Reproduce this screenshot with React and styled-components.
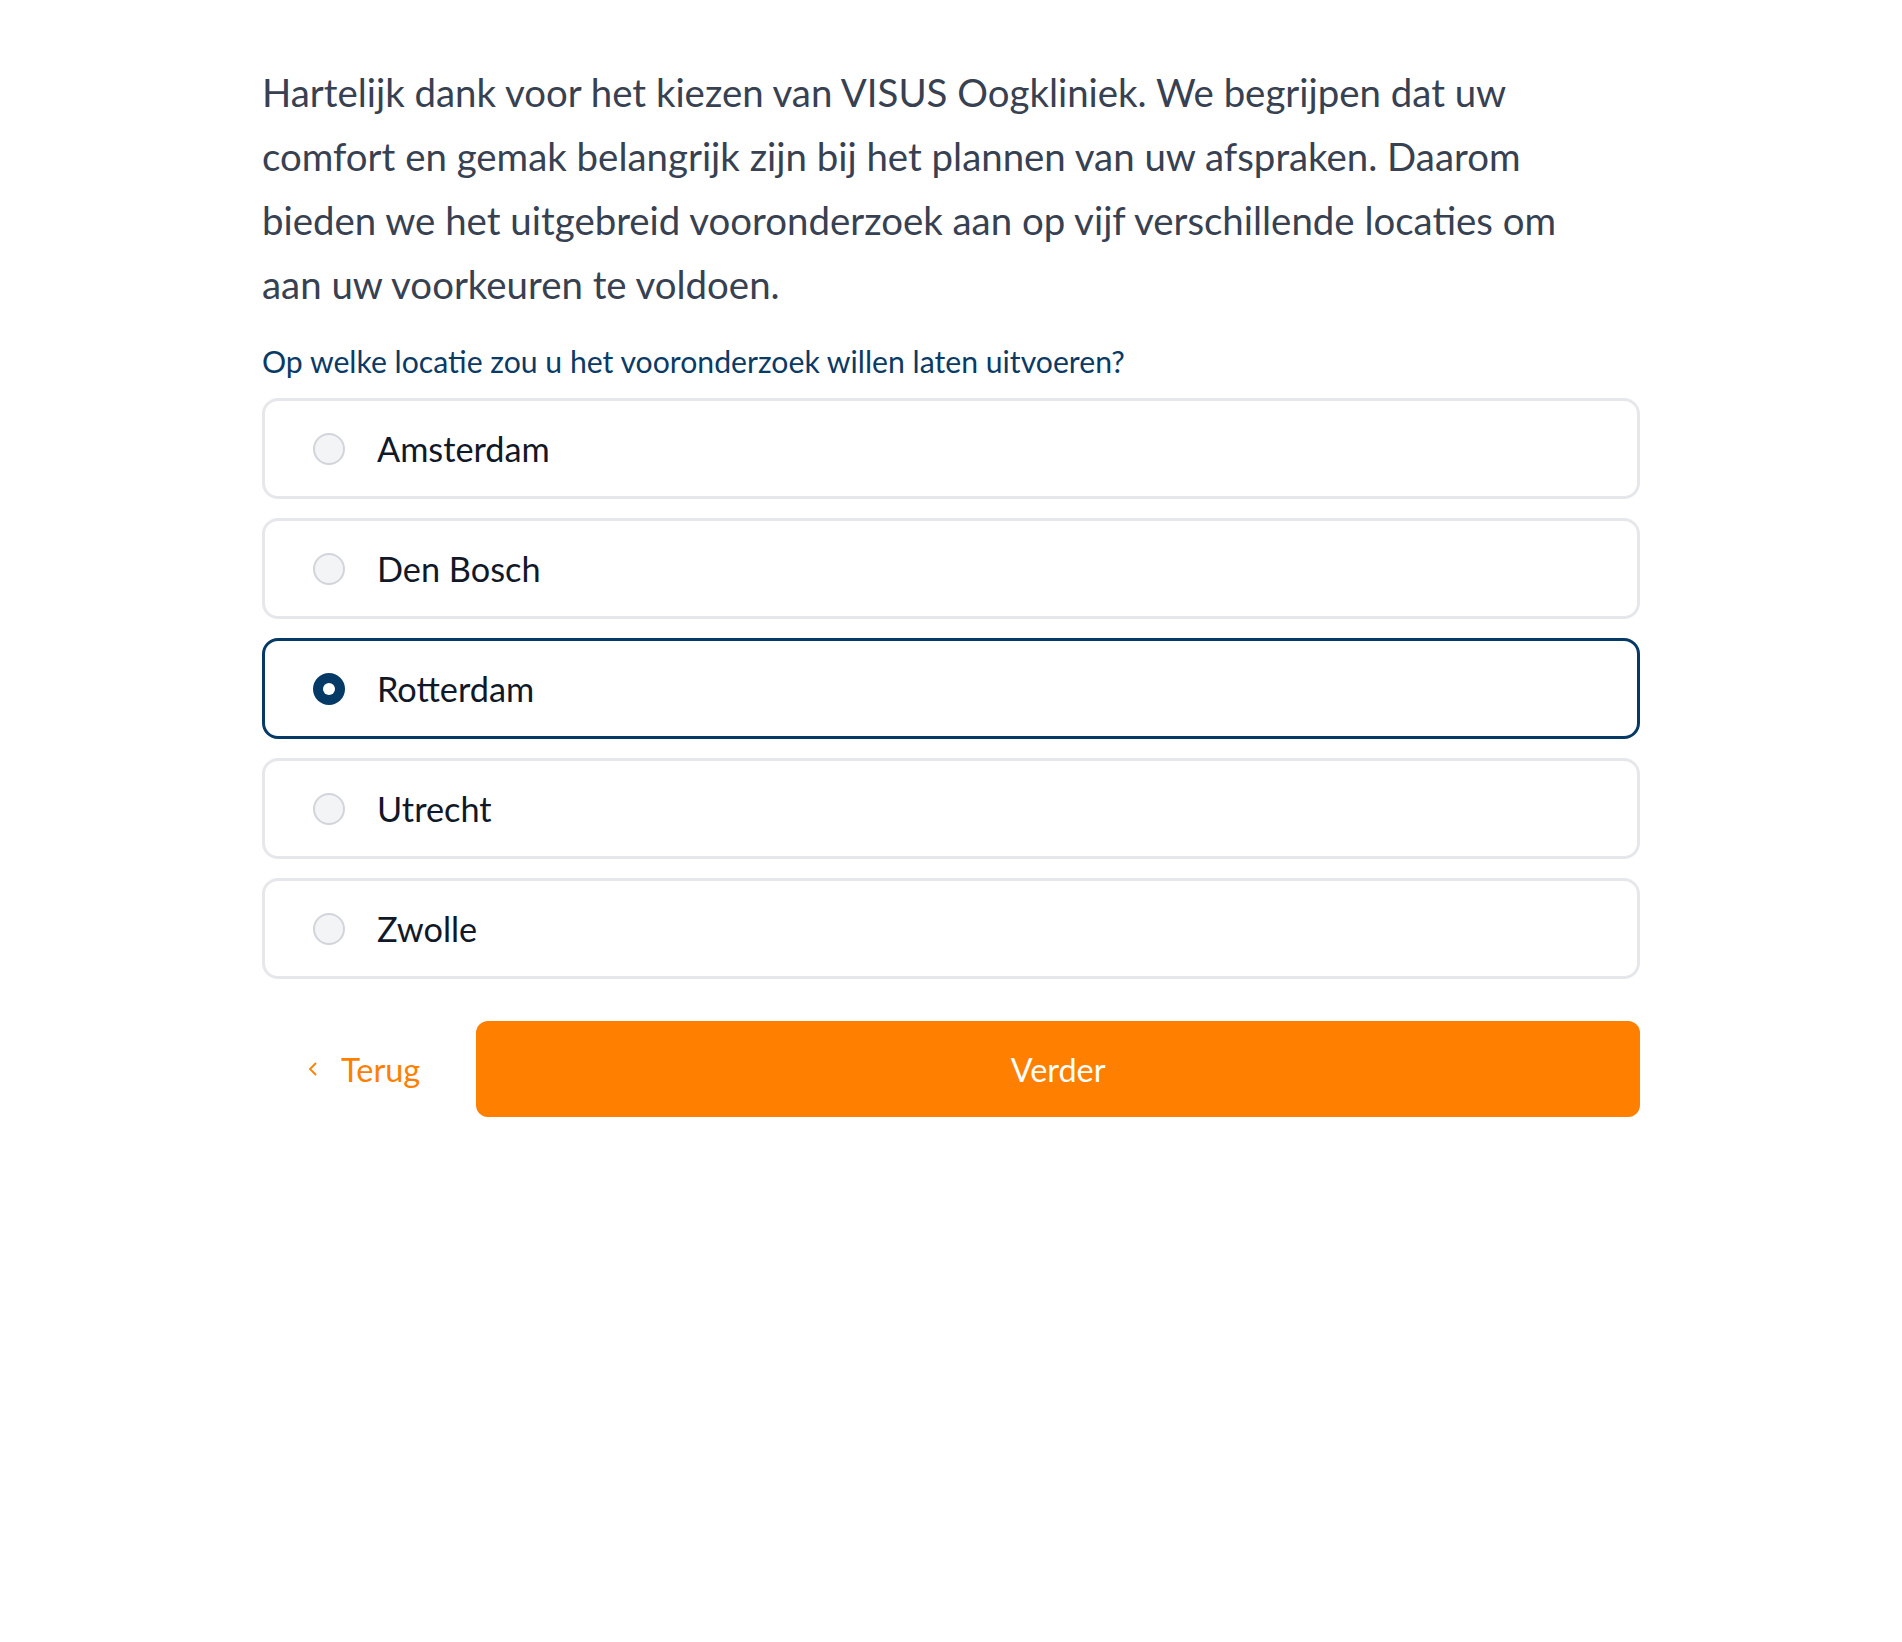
import { useState } from "react";
import styled, { createGlobalStyle, css } from "styled-components";

const GlobalStyle = createGlobalStyle`
  body {
    margin: 0;
    background: #ffffff;
    font-family: Lato, "Open Sans", sans-serif;
  }
`;

const Page = styled.div`
  width: 1378px;
  margin: 0 auto;
  padding-top: 60px;
  box-sizing: border-box;
`;

const Intro = styled.p`
  max-width: 1340px;
  margin: 0;
  font-size: 38.4px;
  line-height: 64px;
  color: #374151;
`;

const Question = styled.p`
  margin: 25px 0 17px;
  font-size: 30.2px;
  line-height: 40px;
  color: #0a3a66;
`;

const Options = styled.div`
  display: flex;
  flex-direction: column;
  gap: 19px;
`;

const Option = styled.label`
  display: flex;
  align-items: center;
  gap: 32px;
  height: 101px;
  padding: 0 48px;
  box-sizing: border-box;
  border: 3px solid ${(p) => (p.$active ? "#063a66" : "#e5e7eb")};
  border-radius: 16px;
  cursor: pointer;
`;

const Radio = styled.span`
  position: relative;
  width: 32px;
  height: 32px;
  border-radius: 50%;
  box-sizing: border-box;
  flex-shrink: 0;
  ${(p) =>
    p.$checked
      ? css`
          background: #063a66;
          &::after {
            content: "";
            position: absolute;
            top: 10px;
            left: 10px;
            width: 12px;
            height: 12px;
            border-radius: 50%;
            background: #ffffff;
          }
        `
      : css`
          background: #f3f4f6;
          border: 2px solid #d1d5db;
        `}
`;

const Label = styled.span`
  font-size: 34.3px;
  color: #111827;
`;

const Actions = styled.div`
  display: flex;
  align-items: center;
  gap: 24px;
  margin-top: 42px;
`;

const BackButton = styled.button`
  display: flex;
  align-items: center;
  gap: 22px;
  height: 96px;
  padding: 0 32px 0 45px;
  border: none;
  background: transparent;
  color: #ff7f00;
  font-family: inherit;
  font-size: 32.5px;
  cursor: pointer;
`;

const NextButton = styled.button`
  flex: 1;
  height: 96px;
  border: none;
  border-radius: 12px;
  background: #ff7f00;
  color: #ffffff;
  font-family: inherit;
  font-size: 32.4px;
  cursor: pointer;
`;

const locations = ["Amsterdam", "Den Bosch", "Rotterdam", "Utrecht", "Zwolle"];

export default function App() {
  const [selected, setSelected] = useState("Rotterdam");

  return (
    <>
      <GlobalStyle />
      <Page>
        <Intro>
          Hartelijk dank voor het kiezen van VISUS Oogkliniek. We begrijpen dat uw comfort en gemak
          belangrijk zijn bij het plannen van uw afspraken. Daarom bieden we het uitgebreid
          vooronderzoek aan op vijf verschillende locaties om aan uw voorkeuren te voldoen.
        </Intro>
        <Question>Op welke locatie zou u het vooronderzoek willen laten uitvoeren?</Question>
        <Options>
          {locations.map((loc) => (
            <Option key={loc} $active={selected === loc} onClick={() => setSelected(loc)}>
              <Radio $checked={selected === loc} />
              <Label>{loc}</Label>
            </Option>
          ))}
        </Options>
        <Actions>
          <BackButton>
            <svg width="12" height="20" viewBox="0 0 12 20" fill="none">
              <path d="M9 4 L3 10 L9 16" stroke="#ff7f00" strokeWidth="1.8" />
            </svg>
            Terug
          </BackButton>
          <NextButton>Verder</NextButton>
        </Actions>
      </Page>
    </>
  );
}
